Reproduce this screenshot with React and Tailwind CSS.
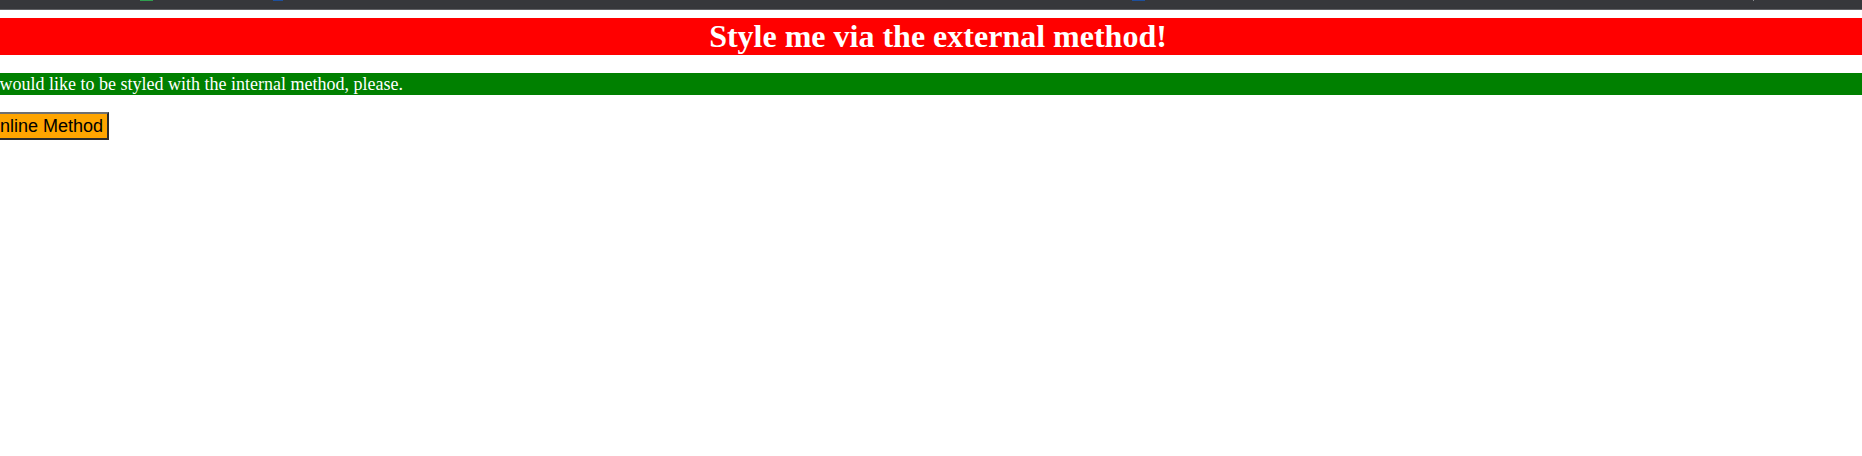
export default function App() {
  return (
    <div className="w-full min-h-[456px] bg-white overflow-hidden">
      {/* browser chrome remnant: bottoms of tab icons peeking in */}
      <div className="flex h-[9px] items-start bg-[#36373b]">
        <span className="ml-[140px] h-px w-[13px] bg-[#2f9e4f]" />
        <span className="ml-[120px] h-px w-[10px] bg-[#1d4f9c]" />
        <span className="ml-[849px] h-px w-[13px] bg-[#1d4f9c]" />
        <span className="ml-[608px] h-px w-px bg-[#8a8b8f]" />
      </div>
      <div className="h-px bg-[#5f6064]" />

      <div className="-mx-[11px] flex flex-col items-start">
        <h1 className="mt-[8px] h-[37px] w-full bg-[#ff0000] pl-[14px] text-center text-[32px] font-bold leading-[37px] text-white [font-family:'Liberation_Serif',serif]">
          Style me via the external method!
        </h1>

        <p className="mt-[18px] h-[22px] w-full bg-[#008000] text-[18px] leading-[22px] text-white [font-family:'Liberation_Serif',serif]">
          I would like to be styled with the internal method, please.
        </p>

        <button className="mt-[17px] h-[28px] border-2 border-t-[#707070] border-l-[#707070] border-r-[#2b2b2b] border-b-[#2b2b2b] bg-[#ffa500] px-[4px] text-[18px] leading-[22px] text-black [font-family:'Liberation_Sans',Arial,sans-serif]">
          Inline Method
        </button>
      </div>
    </div>
  );
}
